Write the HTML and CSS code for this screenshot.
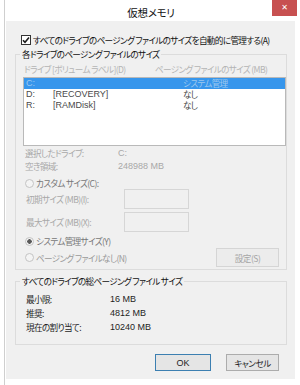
FILE: index.html
```html
<!DOCTYPE html>
<html lang="ja">
<head>
    <meta charset="UTF-8">
    <meta name="viewport" content="width=device-width, initial-scale=1.0">
    <title>仮想メモリ</title>
    <link rel="stylesheet" href="styles.css">
</head>
<body>
    <div class="window">
        <!-- title bar -->
        <div class="titlebar">
            <span></span>
            <h1 class="title">仮想メモリ</h1>
            <button class="close" type="button">✕</button>
        </div>

        <div class="dialog">
            <label class="check-row">
                <span class="checkbox">
                    <svg width="8" height="8" viewBox="0 0 8 8"><path d="M1 4.2 L3 6.3 L7 1.5" fill="none" stroke="#1b1b1b" stroke-width="1.6"/></svg>
                </span>
                すべてのドライブのページング ファイルのサイズを自動的に管理する(A)
            </label>

            <!-- per-drive sizes -->
            <fieldset class="group group-drives">
                <legend>各ドライブのページング ファイルのサイズ</legend>
                <div class="list-head">
                    <span class="head-drive">ドライブ [ボリューム ラベル](D)</span>
                    <span>ページング ファイルのサイズ (MB)</span>
                </div>
                <div class="listbox">
                    <div class="list-row selected">
                        <span class="col-letter latin">C:</span>
                        <span class="col-label latin"></span>
                        <span>システム管理</span>
                    </div>
                    <div class="list-row">
                        <span class="col-letter latin">D:</span>
                        <span class="col-label latin">[RECOVERY]</span>
                        <span>なし</span>
                    </div>
                    <div class="list-row">
                        <span class="col-letter latin">R:</span>
                        <span class="col-label latin">[RAMDisk]</span>
                        <span>なし</span>
                    </div>
                </div>

                <div class="info">
                    <span>選択したドライブ:</span><span class="latin">C:</span>
                    <span>空き領域:</span><span class="latin">248988 MB</span>
                </div>

                <div class="radio-row">
                    <span class="radio"></span>カスタム サイズ(C):
                </div>
                <div class="size-row">
                    <span class="size-label">初期サイズ (MB)(I):</span>
                    <span class="textbox"></span>
                </div>
                <div class="size-row size-row-max">
                    <span class="size-label">最大サイズ (MB)(X):</span>
                    <span class="textbox"></span>
                </div>
                <div class="radio-row radio-system">
                    <span class="radio checked"></span>システム管理サイズ(Y)
                </div>
                <div class="last-row">
                    <div class="radio-row radio-none">
                        <span class="radio"></span>ページング ファイルなし(N)
                    </div>
                    <button class="btn btn-disabled" type="button">設定(S)</button>
                </div>
            </fieldset>

            <!-- totals -->
            <fieldset class="group group-total">
                <legend>すべてのドライブの総ページング ファイル サイズ</legend>
                <div class="totals">
                    <span>最小限:</span><span class="latin">16 MB</span>
                    <span>推奨:</span><span class="latin">4812 MB</span>
                    <span>現在の割り当て:</span><span class="latin">10240 MB</span>
                </div>
            </fieldset>

            <div class="actions">
                <button class="btn btn-default latin" type="button">OK</button>
                <button class="btn" type="button">キャンセル</button>
            </div>
        </div>
    </div>
</body>
</html>
```

FILE: styles.css
```css
body {
    margin: 0;
    width: 300px;
    height: 385px;
    overflow: hidden;
    background: #fff;
    font-family: "Noto Sans CJK JP", sans-serif;
    font-size: 8.6px;
    letter-spacing: -0.65px;
    font-feature-settings: "palt";
    color: #1e1e1e;
}
.latin {
    font-family: "Liberation Sans", "Noto Sans CJK JP", sans-serif;
    font-size: 9px;
    letter-spacing: 0;
}
.window {
    margin-left: 4px;
    border-left: 1px solid #cfcfcf;
    padding-left: 1px;
    height: 385px;
}
.titlebar {
    display: grid;
    grid-template-columns: 1fr auto 1fr;
    height: 21px;
}
.title {
    margin: 0 0 0 -4px;
    font-size: 10.5px;
    font-weight: normal;
    letter-spacing: -0.3px;
    line-height: 25px;
    color: #111;
}
.close {
    justify-self: end;
    width: 25px;
    height: 16px;
    margin-right: 3px;
    padding: 0;
    border: 0;
    background: #c75050;
    color: #fff;
    font-size: 8px;
    line-height: 16px;
    font-family: "DejaVu Sans", sans-serif;
}
.dialog {
    box-sizing: border-box;
    width: 289px;
    height: 358px;
    padding: 13px 0 8px;
    background: #f0f0f0;
}

/* auto-manage checkbox */
.check-row {
    display: flex;
    align-items: center;
    gap: 2px;
    height: 12px;
    padding-left: 15px;
    color: #111;
}
.checkbox {
    display: flex;
    align-items: center;
    justify-content: center;
    box-sizing: border-box;
    width: 10px;
    height: 10px;
    border: 1px solid #333;
    background: #fff;
}

/* group boxes */
.group {
    margin: 2px 8px 0 9px;
    padding: 0 0 2px 7px;
    border: 1px solid #dcdcdc;
}
.group legend {
    margin-left: -3px;
    padding: 0 2px;
    line-height: 12px;
    color: #111;
}
.list-head {
    display: flex;
    padding: 3px 0 0 1px;
    line-height: 12px;
    color: #b4b4b4;
}
.head-drive {
    width: 131px;
}
.listbox {
    box-sizing: border-box;
    height: 69px;
    margin-top: 2px;
    border: 1px solid #b9b9b9;
    background: #fff;
    color: #4a4a4a;
}
.list-row {
    display: flex;
    align-items: center;
    height: 11px;
    padding-left: 2px;
    line-height: 11px;
}
.list-row.selected {
    background: #3796ec;
    color: #9ec8ee;
}
.col-letter {
    width: 27px;
}
.col-label {
    width: 130px;
}
.info {
    display: grid;
    grid-template-columns: 93px auto;
    padding: 1px 0 0 2px;
    line-height: 13px;
    color: #a8a8a8;
}

/* size options */
.radio-row {
    display: flex;
    align-items: center;
    gap: 1px;
    height: 12px;
    margin-top: 4px;
    padding-left: 2px;
    color: #777;
}
.radio {
    box-sizing: border-box;
    width: 9px;
    height: 9px;
    margin-right: 1px;
    border: 1px solid #c4c4c4;
    border-radius: 50%;
    background: #f4f4f4;
}
.radio.checked {
    background: radial-gradient(circle, #5a5a5a 0 2px, #f4f4f4 2.5px);
}
.size-row {
    display: flex;
    align-items: center;
    height: 20px;
    padding-left: 3px;
    color: #a8a8a8;
}
.size-row-max {
    margin-top: 3px;
}
.size-label {
    width: 98px;
}
.textbox {
    box-sizing: border-box;
    width: 65px;
    height: 20px;
    border: 1px solid #d6d6d6;
}
.radio-system {
    margin-top: 3px;
}
.last-row {
    display: flex;
    align-items: center;
    justify-content: space-between;
    height: 19px;
    margin-top: 1px;
    padding-right: 7px;
}
.radio-none {
    margin-top: 0;
    color: #9a9a9a;
}

/* buttons */
.btn {
    box-sizing: border-box;
    height: 19px;
    padding: 0;
    border: 1px solid #acacac;
    background: #e5e5e5;
    font-family: inherit;
    font-size: 8.6px;
    letter-spacing: -0.5px;
    font-feature-settings: "palt";
    color: #1e1e1e;
}
.btn-disabled {
    width: 63px;
    border-color: #d5d5d5;
    background: #ececec;
    color: #a6a6a6;
}
.group-total {
    margin-top: 5px;
    padding-bottom: 10px;
}
.totals {
    display: grid;
    grid-template-columns: 84px auto;
    padding: 5px 0 0 3px;
    line-height: 14px;
}
.actions {
    display: flex;
    justify-content: flex-end;
    gap: 15px;
    margin-top: 9px;
    padding-right: 16px;
}
.actions .btn {
    height: 17px;
    width: 53px;
}
.actions .btn-default {
    width: 56px;
    font-family: "Liberation Sans", sans-serif;
    font-size: 9px;
    letter-spacing: 0;
    border-color: #3c7fb1;
}
```
